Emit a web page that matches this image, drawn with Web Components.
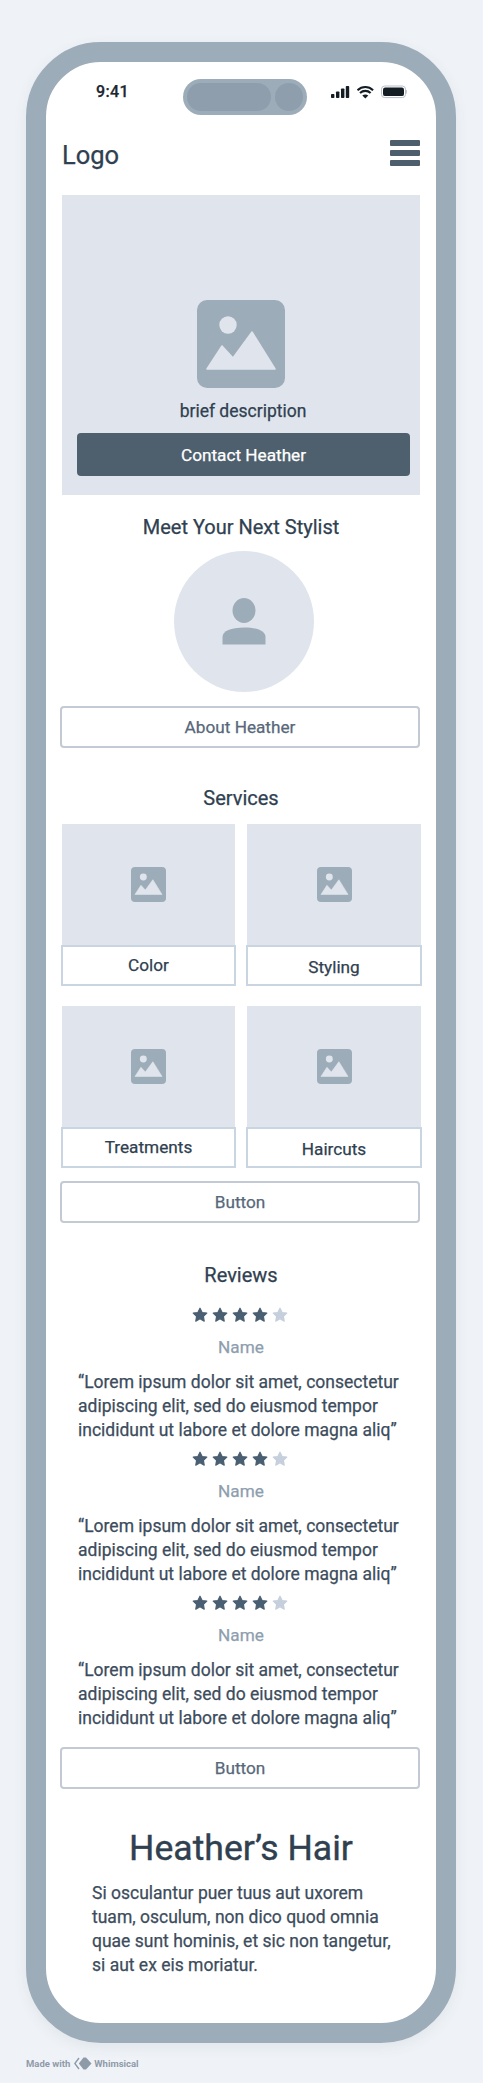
<!DOCTYPE html>
<html lang="en">
<head>
<meta charset="utf-8">
<title>Heather's Hair</title>
<style>
    html, body {
        margin: 0;
        background: #EFF3F7;
    }

    body {
        font-family: Roboto, "Liberation Sans", sans-serif;
        color: #2F4050;
        -webkit-text-stroke: 0.25px currentColor; /* sits between Roboto 400 and 500 */
    }
</style>
</head>
<body>

<template id="phone-frame-template">
    <style>
        :host { display: block; padding: 42px 27px 0 26px; }
        .frame {
            height: 2001px;
            box-sizing: border-box;
            border: 20px solid #9DACB9;
            border-radius: 75px;
            background: #FFFFFF;
            box-shadow: 0 4px 14px rgba(60,80,100,0.08);
            overflow: hidden;
        }
        .content { padding: 0 16px; }
    </style>
    <div class="frame">
        <slot name="status"></slot>
        <div class="content"><slot></slot></div>
    </div>
</template>

<template id="status-bar-template">
    <style>
        :host { display: flex; align-items: center; height: 36px; padding: 17px 0 0 50px; }
        .time { width: 87px; font-size: 16px; font-weight: 500; color: #1B2630; letter-spacing: 0.4px; margin-top: -10px; line-height: 20px; }
        .island {
            width: 124px; height: 36px; box-sizing: border-box; padding: 4px;
            background: #9DACB9; border-radius: 18px;
            display: flex; gap: 4px;
        }
        .pill { width: 84px; height: 28px; border-radius: 14px; background: #8F9EAC; }
        .dot { width: 28px; height: 28px; border-radius: 50%; background: #8F9EAC; }
        .icons { display: flex; align-items: center; margin: -10px 0 0 24px; }
        svg { display: block; }
    </style>
    <span class="time">9:41</span>
    <div class="island"><div class="pill"></div><div class="dot"></div></div>
    <div class="icons">
        <svg width="76" height="14" viewBox="0 0 76 14">
            <rect x="0" y="9" width="3.4" height="4" rx="0.8" fill="#141C24"/>
            <rect x="5" y="6.5" width="3.4" height="6.5" rx="0.8" fill="#141C24"/>
            <rect x="10" y="3.5" width="3.4" height="9.5" rx="0.8" fill="#141C24"/>
            <rect x="14.8" y="1" width="3.4" height="12" rx="0.8" fill="#141C24"/>
            <path d="M26.5 5.2c4.6-4.2 11-4.2 15.6 0M29 8c3.1-2.8 7.6-2.8 10.6 0" fill="none" stroke="#141C24" stroke-width="2.1"/>
            <path d="M34.3 13.4l-3-2.9c1.800-1.500 4.200-1.500 6 0z" fill="#141C24"/>
            <rect x="50.5" y="1" width="24" height="11.600" rx="3.2" fill="#FFFFFF" stroke="#B8C0C8" stroke-width="1"/>
            <rect x="52" y="2.5" width="21" height="8.600" rx="2.200" fill="#141C24"/>
            <rect x="75.200" y="5" width="0.800" height="3.600" fill="#B8C0C8"/>
        </svg>
    </div>
</template>

<template id="site-header-template">
    <style>
        :host { display: flex; justify-content: space-between; align-items: center; height: 26px; margin: 25px 0 29px; }
        .logo { font-size: 25.5px; line-height: 26px; color: #2F4050; margin-top: 4px; }
        .menu { display: flex; flex-direction: column; gap: 4px; width: 30px; }
        .menu i { display: block; height: 6px; border-radius: 1px; background: #4D5E6D; }
    </style>
    <span class="logo"><slot></slot></span>
    <div class="menu"><i></i><i></i><i></i></div>
</template>

<template id="placeholder-image-template">
    <style>
        :host { display: block; }
        svg { display: block; width: 100%; height: 100%; }
    </style>
    <svg viewBox="0 0 88 88">
        <rect width="88" height="88" rx="10" fill="#9DACB9"/>
        <circle cx="31" cy="25" r="8.700" fill="#E0E5ED"/>
        <path d="M10 69L25 46L36 58L55 32L78 69Z" fill="#E0E5ED" stroke="#E0E5ED" stroke-width="1.500" stroke-linejoin="round"/>
    </svg>
</template>

<template id="hero-card-template">
    <style>
        :host {
            display: flex; flex-direction: column; align-items: center; justify-content: flex-end;
            height: 300px; box-sizing: border-box; padding-bottom: 19px; background: #E0E5ED;
        }
        placeholder-image { width: 88px; height: 88px; }
        .text { font-size: 17.5px; line-height: 24px; margin: 11px 0 10px 4px; color: #2F4050; }
        .cta {
            width: 333px; height: 43px; margin-left: 5px; border-radius: 4px; background: #4E5F6E; color: #FFFFFF;
            font-size: 17.2px;
            display: flex; align-items: center; justify-content: center;
        }
    </style>
    <placeholder-image></placeholder-image>
    <div class="text"><slot></slot></div>
    <div class="cta"><slot name="action"></slot></div>
</template>

<template id="section-title-template">
    <style>
        :host { display: block; text-align: center; font-size: 20px; line-height: 24px; color: #2F4050; }
    </style>
    <slot></slot>
</template>

<template id="avatar-circle-template">
    <style>
        :host { display: flex; align-items: center; justify-content: center; width: 140px; height: 141px; margin: 12px 0 14px 112px; border-radius: 50%; background: #E0E5ED; }
        svg { display: block; }
    </style>
    <svg width="44" height="47" viewBox="0 0 44 47">
        <ellipse cx="22" cy="12.500" rx="11.500" ry="12.500" fill="#9DACB9"/>
        <path d="M0.500 46.500V39C0.500 33 9 29.500 22 29.500S43.500 33 43.500 39V46.500Z" fill="#9DACB9"/>
    </svg>
</template>

<template id="outline-button-template">
    <style>
        :host {
            display: flex; align-items: center; justify-content: center;
            width: 360px; height: 42px; box-sizing: border-box; margin-left: -2px;
            border: 2px solid #C3CAD3; border-radius: 4px; background: #FFFFFF;
            font-size: 17.2px; color: #57687A;
        }
    </style>
    <slot></slot>
</template>

<template id="service-card-template">
    <style>
        :host { display: block; }
        .image { height: 121px; display: flex; align-items: center; justify-content: center; background: #E0E5ED; }
        placeholder-image { width: 35px; height: 35px; }
        .label {
            height: 41px; box-sizing: border-box; margin: 0 -1px;
            padding: var(--label-pad, 0);
            display: flex; align-items: center; justify-content: center;
            border: 2px solid #C9D6E2; background: #FFFFFF;
            font-size: 17.2px; color: #2F4050;
        }
    </style>
    <div class="image"><placeholder-image></placeholder-image></div>
    <div class="label"><slot></slot></div>
</template>

<template id="service-grid-template">
    <style>
        :host { display: grid; grid-template-columns: 173px 174px; column-gap: 12px; row-gap: 20px; margin: 14px 0 13px; }
    </style>
    <slot></slot>
</template>

<template id="star-rating-template">
    <style>
        :host { display: flex; justify-content: center; gap: 4px; height: 16px; margin-left: -2px; }
        svg { display: block; }
    </style>
</template>

<template id="review-item-template">
    <style>
        :host { display: block; margin-bottom: 9px; }
        .name { margin: 12px 0 11px; text-align: center; font-size: 17.2px; line-height: 24px; color: #8E9EAE; }
        .quote { padding-left: 16px; font-size: 17.5px; line-height: 24px; color: #3C4C5C; white-space: pre-line; }
    </style>
    <star-rating></star-rating>
    <div class="name"><slot name="name"></slot></div>
    <div class="quote"><slot></slot></div>
</template>

<template id="brand-footer-template">
    <style>
        :host { display: block; text-align: center; }
        h1 { margin: 37px 0 11px; font-size: 35.6px; line-height: 44px; font-weight: 400; color: #2F4050; -webkit-text-stroke-width: 0.4px; }
        p { margin: 0; padding-left: 30px; text-align: left; font-size: 17.5px; line-height: 24px; color: #3C4C5C; white-space: pre-line; }
    </style>
    <h1><slot name="title"></slot></h1>
    <p><slot></slot></p>
</template>

<template id="made-with-template">
    <style>
        :host { display: flex; align-items: center; height: 16px; padding: 12px 0 0 26px; font-size: 9.5px; font-weight: 700; color: #8F9AA8; -webkit-text-stroke-width: 0; }
        svg { display: block; margin: 0 2px 0 4px; }
    </style>
    <span>Made with</span>
    <svg width="18" height="13" viewBox="0 0 18 13">
        <path d="M5 1L0.800 6.500L5 12" fill="none" stroke="#8F9AA8" stroke-width="1.400"/>
        <path d="M9.500 0.500H12L17.500 6.500L12 12.500H9.500L4.800 6.500Z" fill="#8F9AA8"/>
    </svg>
    <span>Whimsical</span>
</template>

<phone-frame>
    <status-bar slot="status"></status-bar>

    <site-header>Logo</site-header>

    <hero-card>
        brief description
        <span slot="action">Contact Heather</span>
    </hero-card>

    <section-title style="margin-top:20px">Meet Your Next Stylist</section-title>
    <avatar-circle></avatar-circle>
    <outline-button>About Heather</outline-button>

    <section-title style="margin-top:38px">Services</section-title>
    <service-grid>
        <service-card style="--label-pad:0 0 2px">Color</service-card>
        <service-card style="--label-pad:2px 0 0">Styling</service-card>
        <service-card style="--label-pad:0 0 2px">Treatments</service-card>
        <service-card style="--label-pad:2px 0 0">Haircuts</service-card>
    </service-grid>
    <outline-button>Button</outline-button>

    <section-title style="margin:40px 0 20px">Reviews</section-title>
    <review-item><span slot="name">Name</span>“Lorem ipsum dolor sit amet, consectetur
adipiscing elit, sed do eiusmod tempor
incididunt ut labore et dolore magna aliq”</review-item>
    <review-item><span slot="name">Name</span>“Lorem ipsum dolor sit amet, consectetur
adipiscing elit, sed do eiusmod tempor
incididunt ut labore et dolore magna aliq”</review-item>
    <review-item style="margin-bottom:17px"><span slot="name">Name</span>“Lorem ipsum dolor sit amet, consectetur
adipiscing elit, sed do eiusmod tempor
incididunt ut labore et dolore magna aliq”</review-item>
    <outline-button>Button</outline-button>

    <brand-footer><span slot="title">Heather’s Hair</span>Si osculantur puer tuus aut uxorem
tuam, osculum, non dico quod omnia
quae sunt hominis, et sic non tangetur,
si aut ex eis moriatur.</brand-footer>
</phone-frame>
<made-with></made-with>

<script>
    // each element just clones its template into an open shadow root
    function defineFromTemplate(tag, setup) {
        customElements.define(tag, class extends HTMLElement {
            constructor() {
                super();
                this.attachShadow({ mode: 'open' });
                const template = document.getElementById(tag + '-template');
                this.shadowRoot.appendChild(template.content.cloneNode(true));
                if (setup) setup(this.shadowRoot);
            }
        });
    }

    const STAR = 'M8 1.200L10.100 5.500L14.800 6.100L11.400 9.400L12.200 14.100L8 11.800L3.800 14.100L4.600 9.400L1.200 6.100L5.900 5.500Z';

    function drawStars(root) {
        for (let i = 0; i < 5; i++) {
            const color = i < 4 ? '#4A5F72' : '#C6D0DC';
            const holder = document.createElement('span');
            holder.innerHTML = '<svg width="16" height="16" viewBox="0 0 16 16"><path d="' + STAR + '" fill="' + color + '" stroke="' + color + '" stroke-width="1.200" stroke-linejoin="round"/></svg>';
            root.appendChild(holder.firstChild);
        }
    }

    defineFromTemplate('phone-frame');
    defineFromTemplate('status-bar');
    defineFromTemplate('site-header');
    defineFromTemplate('placeholder-image');
    defineFromTemplate('hero-card');
    defineFromTemplate('section-title');
    defineFromTemplate('avatar-circle');
    defineFromTemplate('outline-button');
    defineFromTemplate('service-card');
    defineFromTemplate('service-grid');
    defineFromTemplate('star-rating', drawStars);
    defineFromTemplate('review-item');
    defineFromTemplate('brand-footer');
    defineFromTemplate('made-with');
</script>
</body>
</html>
